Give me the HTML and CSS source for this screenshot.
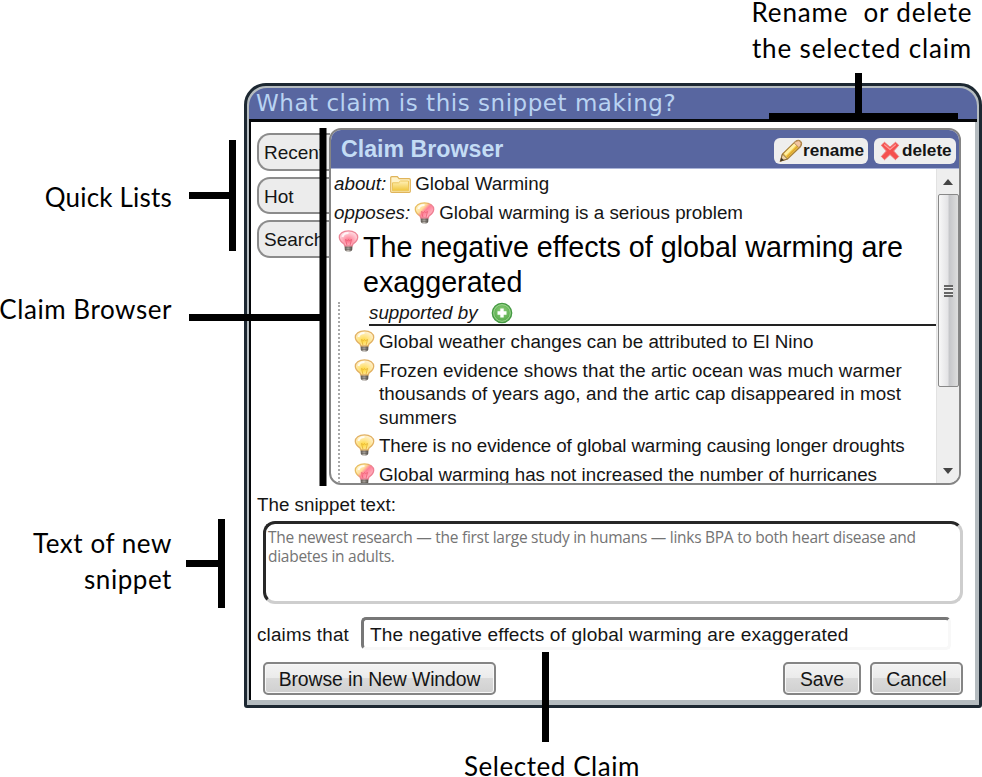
FILE: index.html
```html
<!DOCTYPE html>
<html lang="en">
<head>
<meta charset="utf-8">
<title>Claim Browser</title>
<link rel="stylesheet" href="styles.css">
</head>
<body>
<svg class="defs" width="0" height="0" aria-hidden="true">
  <defs>
    <radialGradient id="yellow" cx=".45" cy=".65" r=".6"><stop offset="0" stop-color="#ffd83a"/><stop offset=".5" stop-color="#ffe58a"/><stop offset="1" stop-color="#fff0cc"/></radialGradient>
    <radialGradient id="pink" cx=".5" cy=".65" r=".6"><stop offset="0" stop-color="#ff6f88"/><stop offset=".5" stop-color="#ffa9b8"/><stop offset="1" stop-color="#ffdbe2"/></radialGradient>
    <linearGradient id="mix" x1="0" y1="0" x2="1" y2=".75"><stop offset=".15" stop-color="#fff6c8"/><stop offset=".42" stop-color="#ffdf9a"/><stop offset=".6" stop-color="#ff7f97"/><stop offset="1" stop-color="#ffc0cb"/></linearGradient>
    <linearGradient id="mixrim" x1="0" y1="0" x2="1" y2=".75"><stop offset=".4" stop-color="#e8bd62"/><stop offset=".65" stop-color="#ee7f93"/></linearGradient>
    <linearGradient id="folder" x1="0" y1="0" x2="0" y2="1"><stop offset="0" stop-color="#fff0b8"/><stop offset="1" stop-color="#f0c63c"/></linearGradient>
    <radialGradient id="green" cx=".5" cy=".4" r=".6"><stop offset="0" stop-color="#8fd07c"/><stop offset="1" stop-color="#4fa545"/></radialGradient>
    <linearGradient id="base" x1="0" y1="0" x2="1" y2="0"><stop offset="0" stop-color="#625c55"/><stop offset=".45" stop-color="#c3beb8"/><stop offset="1" stop-color="#4d4843"/></linearGradient>
    <g id="bulb-base"><path d="M6.200 14.500h7.600v4.600q0 2.600-3.800 2.600t-3.800-2.600z" fill="url(#base)"/><path d="M6.300 17.100h7.400M6.500 19.200h7" stroke="#5b554f" stroke-width=".8"/></g>
    <path id="bulb-glass" d="M10 .9C4.400.9.8 3.700.8 7.300c0 3.200 2.300 5 4.600 6.600.5.300.6.900.7 1.900h7.800c.1-1 .2-1.600.7-1.900 2.300-1.600 4.600-3.400 4.600-6.600C19.200 3.700 15.600.9 10 .9z" stroke-width="1.300"/>
    <path id="filament" fill="none" stroke-width=".8" d="M8.400 15 7 9.500l2 1.200 1-1.200 1 1.200 2-1.200-1.400 5.500"/>
    <symbol id="bulb-yellow" viewBox="0 0 20 22"><use href="#bulb-base"/><use href="#bulb-glass" fill="url(#yellow)" stroke="#e2b163"/><path d="M4 7q1-4 6-4" stroke="#fff" stroke-width="2" fill="none" opacity=".8"/><use href="#filament" stroke="#e3b030"/></symbol>
    <symbol id="bulb-pink" viewBox="0 0 20 22"><use href="#bulb-base"/><use href="#bulb-glass" fill="url(#pink)" stroke="#ec8596"/><path d="M4 7q1-4 6-4" stroke="#fff" stroke-width="2" fill="none" opacity=".8"/><use href="#filament" stroke="#e85a73"/></symbol>
    <symbol id="bulb-mix" viewBox="0 0 20 22"><use href="#bulb-base"/><use href="#bulb-glass" fill="url(#mix)" stroke="url(#mixrim)"/><path d="M4 7q1-4 6-4" stroke="#fff" stroke-width="2" fill="none" opacity=".8"/><use href="#filament" stroke="#ee5f74"/></symbol>
  </defs>
</svg>

<main class="window">
  <div class="frame">
    <h1 class="title"><span>What claim is this snippet making?</span></h1>
    <div class="content">
      <div class="top">
        <nav class="tabs"><div class="tab">Recent</div><div class="tab">Hot</div><div class="tab">Search</div></nav>
        <section class="browser">
          <header class="bar">
            <h2>Claim Browser</h2>
            <button class="tool rename"><svg width="24" height="24" viewBox="0 0 24 24"><path d="m1.500 22 2-7L16.500 2.500q3-2 5 0t0 5L8.500 20z" fill="#f5cf53" stroke="#a9803a" stroke-width="1.300"/><path d="m6 15.500 11-11" stroke="#fff0a4" stroke-width="2.500"/><path d="m8 18 11-11" stroke="#dca52d" stroke-width="1.500"/><path d="m15.200 4 1.500-1.500q3-1.700 4.600 0t0 4.600L19.800 8.500z" fill="#f3c5a0" stroke="#b58a5c"/><path d="m3.500 15 5 5-7 2z" fill="#edd5a7" stroke="#8a6d3c"/><path d="m2.500 18.800 2.500 2.400L1 22.500z" fill="#3e3529"/></svg><span>rename</span></button>
            <button class="tool delete"><svg width="20" height="20" viewBox="0 0 20 20"><path d="M4.500 1.300 10 6.200l5.500-4.900 3.200 3L13.600 10l5.100 5.500-3.200 3.200L10 13.500l-5.500 5.200-3.200-3.200L6.400 10 1.300 4.300z" fill="#f5504e" stroke="#ee7472" stroke-linejoin="round"/><path d="m4.200 3.500 5.800 5 5.800-5" fill="none" stroke="#ff9c98" stroke-width="1.300"/></svg><span>delete</span></button>
          </header>
          <div class="pane">
            <div class="claims">
              <p class="rel"><i>about:</i><svg class="folder" width="21" height="17" viewBox="0 0 21 17"><path d="M.7 15.500V1.700q0-1 1-1h5.600l1.700 2h10.300q1 0 1 1v11.800q0 .8-1 .8H1.700q-1 0-1-.8z" fill="#fff3c8" stroke="#e0b45a" stroke-width="1.200"/><path d="M2.500 14.800V6.800h6l2-1.800h8v9.800z" fill="url(#folder)" stroke="#ecc55c"/></svg><span>Global Warming</span></p>
              <p class="rel"><i>opposes:</i><svg class="bulb" width="21" height="22"><use href="#bulb-mix"/></svg><span>Global warming is a serious problem</span></p>
              <div class="current"><svg width="21" height="22"><use href="#bulb-pink"/></svg><h3>The negative effects of global warming are exaggerated</h3></div>
              <div class="tree">
                <div class="support"><i>supported by</i><svg width="22" height="22" viewBox="0 0 22 22"><circle cx="11" cy="11" r="9.700" fill="url(#green)" stroke="#459a43" stroke-width="1.300"/><circle cx="11" cy="11" r="8.300" fill="none" stroke="#acdca0" stroke-width=".8"/><path d="M9.300 6.500h3.400v2.800h2.800v3.400h-2.800v2.800H9.300v-2.800H6.500V9.300h2.800z" fill="#fff"/></svg></div>
                <ul>
                  <li><svg width="21" height="22"><use href="#bulb-yellow"/></svg><span class="c1">Global weather changes can be attributed to El Nino</span></li>
                  <li><svg width="21" height="22"><use href="#bulb-yellow"/></svg><span class="c2">Frozen evidence shows that the artic ocean was much warmer<br>thousands of years ago, and the artic cap disappeared in most<br>summers</span></li>
                  <li><svg width="21" height="22"><use href="#bulb-yellow"/></svg><span class="c3">There is no evidence of global warming causing longer droughts</span></li>
                  <li><svg width="21" height="22"><use href="#bulb-mix"/></svg><span>Global warming has not increased the number of hurricanes</span></li>
                </ul>
              </div>
            </div>
            <div class="scroll"><div class="arrow up"></div><div class="thumb"><div class="grip"></div></div><div class="arrow down"></div></div>
          </div>
        </section>
      </div>
      <p class="label">The snippet text:</p>
      <div class="snippet">The newest research — the first large study in humans — links BPA to both heart disease and<br>diabetes in adults.</div>
      <div class="claim-row"><span class="that">claims that</span><div class="field">The negative effects of global warming are exaggerated</div></div>
      <div class="actions"><button class="btn browse">Browse in New Window</button><button class="btn save">Save</button><button class="btn cancel">Cancel</button></div>
    </div>
  </div>
</main>

<svg class="callouts" width="982" height="777" viewBox="0 0 982 777" aria-hidden="true"><path d="M858.500 73v43M189 195.500h41M232.500 140v111M189 317.500h131M323 128v358M186 563.500h34M221.500 519v89M545.500 652v90" stroke="#000" stroke-width="7" fill="none"/><path d="M769 116.500h189" stroke="#000" stroke-width="7"/></svg>
<div class="note n-tools">Rename&nbsp; or delete<br>the selected claim</div>
<div class="note n-quick">Quick Lists</div>
<div class="note n-browser">Claim Browser</div>
<div class="note n-text">Text of new<br>snippet</div>
<div class="note n-selected">Selected Claim</div>
</body>
</html>
```
FILE: styles.css
```css
* { box-sizing: border-box; }
body { margin: 0; width: 982px; height: 777px; overflow: hidden; position: relative; background: #fff; color: #151515; font: 18.8px/24px "Liberation Sans", Arial, sans-serif; }
h1, h2, h3, p, ul { margin: 0; padding: 0; font-weight: normal; }
ul { list-style: none; }
svg { display: block; flex: none; }
button { margin: 0; padding: 0; font-family: inherit; color: #151515; }
.defs { position: absolute; }
span, .field, .btn { white-space: nowrap; }

.window { margin: 83px 0 0 244px; width: 738px; height: 625px; border: 3px solid #1d2832; border-radius: 22px 22px 3px 3px; background: #b5bcc0; overflow: hidden; }
body::before { content: ""; display: table; }
.frame { height: 619px; padding: 2px 4px 5px 2px; display: flex; flex-direction: column; }
.title { height: 34px; margin-right: -2px; padding-left: 7px; border-bottom: 3px solid #05070a; border-radius: 18px 18px 0 0; background: #5866a0; color: #b9d3f2; font: 23px/31px "DejaVu Sans", Verdana, sans-serif; letter-spacing: .53px; }
.content { flex: 1; border-left: 2px solid #05070a; background: #fff; padding: 6px 12px 0 6px; }
.top { display: flex; height: 358px; }
.tabs { width: 73px; padding-top: 5px; display: flex; flex-direction: column; gap: 6px; }
.tab { height: 37.500px; border: 2px solid #8b8b8b; border-right: 0; border-radius: 13px 0 0 13px; background: #ececec; padding-left: 5px; line-height: 35px; font-size: 19px; }
.browser { width: 632px; height: 357px; margin-left: -1px; border: 2px solid #858585; border-radius: 12px; overflow: hidden; background: #fff; display: flex; flex-direction: column; }
.bar { height: 39px; flex: none; background: #5866a0; border-bottom: 1px solid #aab4d8; display: flex; align-items: center; padding: 8px 3px 4px 10px; }
h2 { flex: 1; font-weight: bold; font-size: 23.2px; line-height: 26px; color: #c3dcf5; margin-top: -5px; }
.tool { height: 26px; border: 0; border-radius: 6px; background: #eee; display: flex; align-items: center; font-weight: bold; font-size: 17.2px; }
.rename { width: 94px; padding-left: 5px; margin-right: 6px; }
.delete { width: 82px; padding-left: 6px; }
.delete span { margin-left: 2px; }
.tool span { margin-top: -1px; }
.pane { flex: 1; display: flex; min-height: 0; }
.claims { width: 605px; overflow: hidden; padding: 3px 0 0 3px; }
.rel { display: flex; align-items: center; height: 24px; margin-bottom: 5px; }
.folder { margin: 0 4px; }
.bulb { margin: 0 4px; }
.current { display: flex; }
.current svg { margin-left: 4px; }
h3 { width: 550px; margin-left: 4px; color: #000; font-size: 28.700px; line-height: 35px; }
.tree { margin: 2px 0 0 4px; border-left: 2px dotted #aaa; height: 200px; }
.support { height: 24px; margin-left: 29px; border-bottom: 2px solid #222; display: flex; align-items: center; }
.support svg { margin-left: 13px; }
.tree ul { padding: 4px 0 0 14px; }
.tree li { display: flex; gap: 4px; margin-bottom: 5px; line-height: 23.500px; }
.c2 { letter-spacing: .05px; }
.c3 { letter-spacing: -.11px; }
.scroll { width: 23px; background: #eee; border-left: 1px solid #e2e2e2; display: flex; flex-direction: column; align-items: center; }
.arrow { border: 5px solid transparent; width: 0; height: 0; }
.up { border-bottom: 6px solid #444; border-top: 0; margin: 10px 0 9px; }
.thumb { width: 21px; height: 193px; border: 1px solid #888; border-radius: 2px; background: linear-gradient(90deg, #f8f8f8, #e4e4e6 45%, #c6c7ca 55%, #dedede); display: flex; align-items: center; justify-content: center; }
.grip { width: 9px; height: 12px; background: repeating-linear-gradient(#666 0 2px, #eee 2px 3.300px); }
.down { border-top: 6px solid #444; border-bottom: 0; margin-top: 81px; }
.label { margin-top: 7px; }
.snippet { margin: 4px 0 0 6px; width: 700px; height: 83px; border: 3px solid; border-color: #272727 #cecece #cecece #272727; border-radius: 12px; padding: 4px 2px; font: 15.500px/19px "Open Sans", sans-serif; letter-spacing: -.27px; color: #747474; white-space: nowrap; }
.claim-row { display: flex; align-items: center; margin-top: 13px; height: 33px; }
.that { width: 104px; padding-top: 2px; letter-spacing: .2px; }
.field { width: 590px; height: 33px; border: 3px solid; border-color: #777 #f8f8f8 #f8f8f8 #777; border-radius: 5px; padding-left: 6px; line-height: 30px; font-size: 19.100px; letter-spacing: .14px; }
.actions { display: flex; margin: 12px 0 0 6px; width: 700px; }
.btn { height: 33px; border: 2px solid #858585; border-radius: 5px; background: linear-gradient(#f3f3f3, #ebebeb 49%, #dadada 50%, #d0d0d0); box-shadow: inset 0 0 0 1px #f8f8f8; font-size: 19.400px; padding-top: 2px; }
.browse { width: 233px; margin-right: auto; letter-spacing: -.1px; }
.save { width: 78px; margin-right: 9px; }
.cancel { width: 93px; }

.callouts { position: absolute; left: 0; top: 0; }
.note { position: absolute; font: 26px/36px Lato, Carlito, sans-serif; letter-spacing: .55px; color: #000; white-space: nowrap; }
.n-tools { left: 732px; width: 260px; top: -6px; text-align: center; letter-spacing: .85px; }
.n-quick { right: 810px; top: 179px; letter-spacing: .2px; }
.n-browser { right: 810px; top: 291px; }
.n-text { right: 810px; top: 525px; text-align: right; }
.n-selected { left: 464px; top: 752px; line-height: 28px; height: 25px; }
```
